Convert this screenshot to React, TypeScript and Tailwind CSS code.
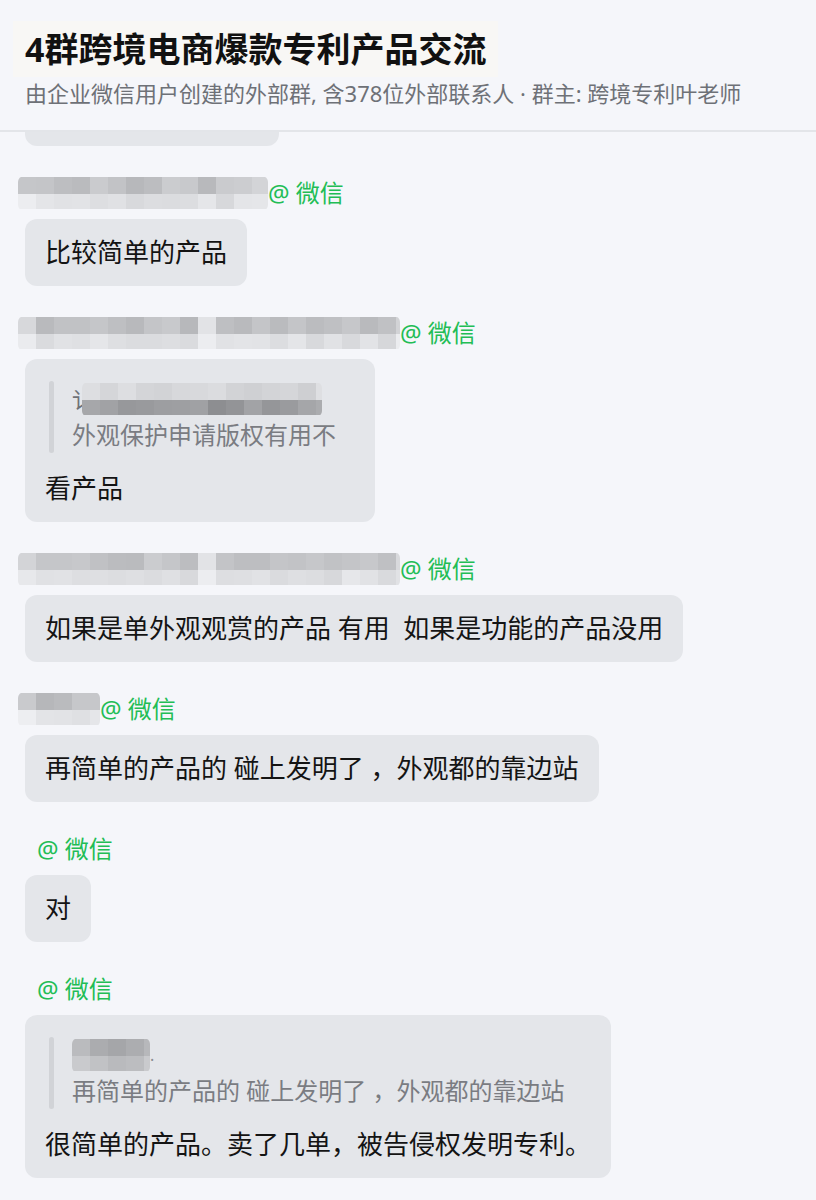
import React from "react";

type Quote = { nameWidth: number; nameSeed: number; lead?: string; pad?: number; text: string };

type Message = {
  name?: { width: number; seed: number; light?: number[] };
  text: string;
  quote?: Quote;
};

const messages: Message[] = [
  { name: { width: 250, seed: 7 }, text: "比较简单的产品" },
  {
    name: { width: 382, seed: 19, light: [10] },
    text: "看产品",
    quote: { nameWidth: 240, nameSeed: 3, lead: "讠", pad: 33, text: "外观保护申请版权有用不" },
  },
  { name: { width: 382, seed: 31, light: [10] }, text: "如果是单外观观赏的产品 有用  如果是功能的产品没用" },
  { name: { width: 82, seed: 44 }, text: "再简单的产品的 碰上发明了 ，外观都的靠边站" },
  { text: "对" },
  {
    text: "很简单的产品。卖了几单，被告侵权发明专利。",
    quote: { nameWidth: 78, nameSeed: 12, text: "再简单的产品的 碰上发明了 ，外观都的靠边站" },
  },
];

function rng(seed: number) {
  let s = seed * 7919 + 17;
  return () => {
    s = (s * 9301 + 49297) % 233280;
    return s / 233280;
  };
}

function gray(v: number) {
  const c = Math.round(v);
  return `rgb(${c},${c + 1},${c + 4})`;
}

// pixelated (mosaic) name, like the blurred screenshot names
function Mosaic({
  width,
  seed,
  top,
  bottom,
  light = [],
  height = 35,
}: {
  width: number;
  seed: number;
  top: [number, number];
  bottom: [number, number];
  light?: number[];
  height?: number;
}) {
  const r = rng(seed);
  const cell = 18;
  const cols = Math.ceil(width / cell);
  const rowTop = Math.round(height / 2);
  const cells: React.ReactNode[] = [];
  for (let i = 0; i < cols; i++) {
    const isLight = light.includes(i);
    const edge = i === 0 || i === cols - 1;
    const t = isLight ? 226 : top[0] + r() * (top[1] - top[0]) + (edge ? 14 : 0);
    const b = isLight ? 236 : bottom[0] + r() * (bottom[1] - bottom[0]) + (edge ? 8 : 0);
    cells.push(<rect key={`t${i}`} x={i * cell} y={1} width={cell} height={rowTop - 1} fill={gray(t)} />);
    cells.push(<rect key={`b${i}`} x={i * cell} y={rowTop} width={cell} height={height - rowTop - 2} fill={gray(b)} />);
  }
  return (
    <svg width={width} height={height} className="shrink-0">
      <defs>
        <filter id={`soft${seed}`} x="-5%" y="-20%" width="110%" height="140%">
          <feGaussianBlur stdDeviation="0.7" />
        </filter>
        <clipPath id={`clip${seed}`}>
          <rect x={0} y={0} width={width} height={height} rx={6} />
        </clipPath>
      </defs>
      <g filter={`url(#soft${seed})`} clipPath={`url(#clip${seed})`}>
        {cells}
      </g>
    </svg>
  );
}

function Label({ name }: { name?: Message["name"] }) {
  return (
    <div className="flex h-[30px] items-center">
      {name ? (
        <div className="-ml-[7px]">
          <Mosaic width={name.width} seed={name.seed} top={[182, 204]} bottom={[214, 230]} light={name.light} />
        </div>
      ) : (
        <div className="w-[12px]" />
      )}
      <span className="text-[24px] leading-[30px] text-[#22bd55]">@ 微信</span>
    </div>
  );
}

function QuoteBlock({ quote }: { quote: Quote }) {
  return (
    <div className="ml-[4px] flex">
      <div className="w-[5px] rounded-full bg-[#d1d3d7]" />
      <div className="pl-[18px]">
        <div className="flex h-[36px] items-center">
          {quote.lead && <span className="text-[22px] leading-[36px] text-[#6f7278]">{quote.lead}</span>}
          <div className={quote.lead ? "-ml-[12px]" : ""}>
            <Mosaic
              width={quote.nameWidth}
              seed={quote.nameSeed}
              top={quote.lead ? [205, 222] : [164, 176]}
              bottom={quote.lead ? [140, 168] : [184, 196]}
            />
          </div>
          {!quote.lead && <span className="text-[16px] leading-[36px] text-[#8a8d92]">.</span>}
          {quote.pad && <div style={{ width: quote.pad }} />}
        </div>
        <div className="text-[24px] leading-[36px] whitespace-pre text-[#7a7c82]">{quote.text}</div>
      </div>
    </div>
  );
}

function Bubble({ m }: { m: Message }) {
  return (
    <div
      className={`mt-[11px] self-start rounded-[12px] bg-[#e4e6ea] px-[20px] ${
        m.quote ? "pt-[22px] pb-[16px]" : "py-[16px]"
      }`}
    >
      {m.quote && <QuoteBlock quote={m.quote} />}
      <div className={`text-[26px] leading-[35px] whitespace-pre text-[#141414] ${m.quote ? "mt-[18px]" : ""}`}>
        {m.text}
      </div>
    </div>
  );
}

export default function App() {
  return (
    <div
      className="flex h-[1200px] w-full flex-col overflow-hidden bg-[#f5f6fa]"
      style={{ fontFamily: '"Noto Sans", "Noto Sans CJK SC", sans-serif' }}
    >
      <header className="relative z-10 border-b-2 border-[#e3e5e9] bg-[#f5f6fa] px-[25px] pt-[21px] pb-[22px]">
        <div>
          <span className="-ml-[12px] inline-block bg-[#f8f7f5] px-[12px] py-[6px] text-[34px] leading-[44px] font-bold text-[#111]">
            4群跨境电商爆款专利产品交流
          </span>
        </div>
        <div className="mt-[1px] text-[22px] leading-[30px] text-[#6e7177]">
          由企业微信用户创建的外部群, 含378位外部联系人 · 群主: 跨境专利叶老师
        </div>
      </header>

      <div className="flex flex-col items-start px-[25px]">
        <div className="-mt-[53px] h-[67px] w-[254px] rounded-[12px] bg-[#e4e6ea]" />
        {messages.map((m, i) => (
          <div key={i} className="mt-[32px] flex flex-col">
            <Label name={m.name} />
            <Bubble m={m} />
          </div>
        ))}
      </div>
    </div>
  );
}
